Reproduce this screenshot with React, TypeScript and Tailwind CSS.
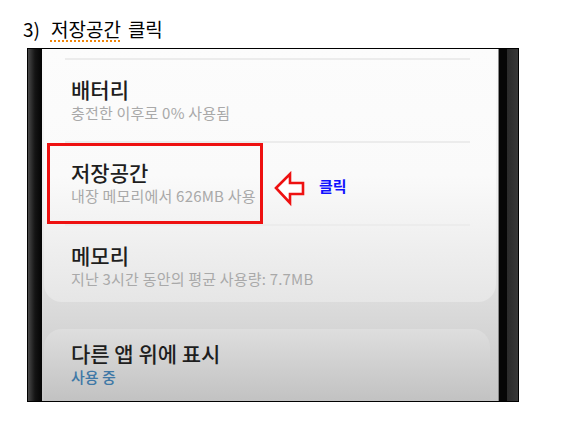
import React from "react";

const font = { fontFamily: '"Noto Sans CJK KR", "Noto Sans", sans-serif' };

function Row({ title, sub }: { title: string; sub: string }) {
  return (
    <div className="pl-[27px] pt-[15px] h-[81px]">
      <div className="text-[21px] leading-[28px] text-[#1e1e1e] font-medium">{title}</div>
      <div className="text-[15px] leading-[20px] text-[#a9a9a9] tracking-[0.2px] whitespace-nowrap">{sub}</div>
    </div>
  );
}

export default function App() {
  return (
    <div className="w-[588px] h-[422px] bg-white relative" style={font}>
      <div className="pl-[23px] pt-[16px] h-[48px] text-[19px] leading-[25px] text-black font-normal flex">
        <span>3)</span>
        <span className="ml-[11px] underline decoration-dotted decoration-[#f08000] underline-offset-[4px]">저장공간</span>
        <span className="ml-[7px]">클릭</span>
      </div>

      <div className="ml-[27px] w-[492px] h-[354px] border border-black flex">
        {/* left bezel */}
        <div className="w-[14px] bg-gradient-to-r from-[#4a4a4a] via-[#141414] to-[#050505]" />

        {/* screen */}
        <div className="flex-1 relative overflow-hidden bg-gradient-to-b from-[#fbfbfb] via-[#ededed] to-[#c6c6c6] flex flex-col">
          <div className="mx-[2px] rounded-b-[18px] bg-gradient-to-b from-[#fcfcfc] via-[#fafafa] to-[#e6e6e6]">
            <div className="h-[9px]" />
            <div className="ml-[21px] mr-[26px] h-[2px] bg-[#ececec]" />
            <Row title="배터리" sub="충전한 이후로 0% 사용됨" />
            <div className="ml-[21px] mr-[26px] h-[2px] bg-[#ececec]" />
            <Row title="저장공간" sub="내장 메모리에서 626MB 사용" />
            <div className="ml-[21px] mr-[26px] h-[2px] bg-[#ececec]" />
            <div className="pl-[27px] pt-[15px] h-[76px]">
              <div className="text-[21px] leading-[28px] text-[#1e1e1e] font-medium">메모리</div>
              <div className="text-[15px] leading-[20px] text-[#a9a9a9] tracking-[0.2px] whitespace-nowrap">지난 3시간 동안의 평균 사용량: 7.7MB</div>
            </div>
          </div>

          <div className="mt-[27px] mx-[2px] mr-[8px] flex-1 rounded-t-[18px] bg-gradient-to-b from-[#dedede] to-[#c2c2c2] pl-[27px] pt-[10px]">
            <div className="text-[21px] leading-[28px] text-[#1e1e1e] font-medium">다른 앱 위에 표시</div>
            <div className="text-[15px] leading-[20px] text-[#3f78a6] font-medium">사용 중</div>
          </div>

          {/* annotation: red box */}
          <div className="absolute left-[5px] top-[94px] w-[216px] h-[81px] border-[3px] border-[#ee1111]" />

          {/* annotation: arrow */}
          <svg className="absolute left-[232px] top-[122px]" width="32" height="36" viewBox="0 0 32 36">
            <path
              d="M2 17 L16 3 L16 12 L29 12 L29 23 L16 23 L16 32 Z"
              fill="white"
              stroke="#ee1111"
              strokeWidth="2.6"
              strokeLinejoin="miter"
            />
          </svg>
          <div className="absolute left-[277px] top-[127px] text-[15px] leading-[20px] font-bold text-[#1010ff]">클릭</div>
        </div>

        {/* right bezel */}
        <div className="w-[20px] flex">
          <div className="w-[1px] bg-[#8a8a8a]" />
          <div className="w-[8px] bg-[#060606]" />
          <div className="flex-1 bg-gradient-to-r from-[#2a2a2a] to-[#383838]" />
        </div>
      </div>
    </div>
  );
}
